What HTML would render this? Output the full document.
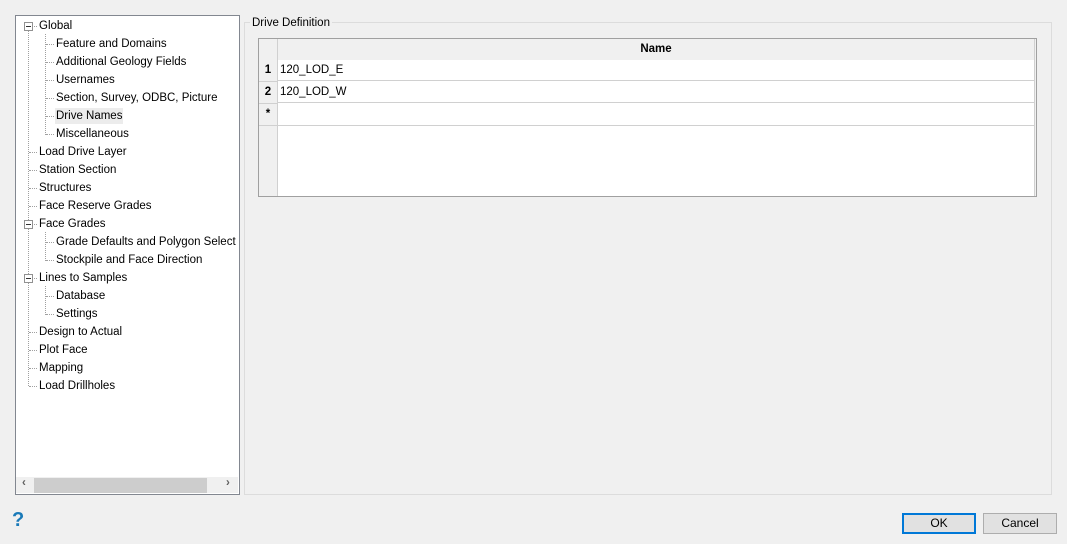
<!DOCTYPE html><html><head><style>
body{margin:0;width:1067px;height:544px;background:#f0f0f0;font-family:"Liberation Sans",sans-serif;font-size:11.5px;color:#000;position:relative;overflow:hidden}
.a{position:absolute}
.tree{left:15px;top:15px;width:223px;height:478px;border:1px solid #828790;background:#fff}
.it{position:absolute;white-space:nowrap;line-height:16px}
.sel{background:#ececec}
.vl{position:absolute;border-left:1px dotted #a0a0a0;width:0}
.hl{position:absolute;border-top:1px dotted #a0a0a0;height:0}
.box{position:absolute;width:7px;height:7px;border:1px solid #919191;background:#fff}
.box:after{content:"";position:absolute;left:1px;top:3px;width:5px;height:1px;background:#333}
.btn{position:absolute;height:19px;background:#e1e1e1;border:1px solid #adadad;text-align:center;line-height:19px;font-size:12px}
</style></head><body>
<div class="a tree">
<div class="vl" style="left:12px;top:15px;height:355px"></div>
<div class="vl" style="left:29px;top:18px;height:101px"></div>
<div class="vl" style="left:29px;top:216px;height:29px"></div>
<div class="vl" style="left:29px;top:270px;height:29px"></div>
</div>
<div id="t" class="a" style="left:0;top:0;width:238px;height:476px;overflow:hidden"></div>
<script>
var items=[[0,"Global",1],[1,"Feature and Domains"],[1,"Additional Geology Fields"],[1,"Usernames"],[1,"Section, Survey, ODBC, Picture"],[1,"Drive Names",0,1],[1,"Miscellaneous"],[0,"Load Drive Layer"],[0,"Station Section"],[0,"Structures"],[0,"Face Reserve Grades"],[0,"Face Grades",1],[1,"Grade Defaults and Polygon Select"],[1,"Stockpile and Face Direction"],[0,"Lines to Samples",1],[1,"Database"],[1,"Settings"],[0,"Design to Actual"],[0,"Plot Face"],[0,"Mapping"],[0,"Load Drillholes"]];
var h="";items.forEach(function(it,i){var y=26+i*18;var x=it[0]?56:39;
h+='<div class="hl" style="left:'+(it[0]?46:29)+'px;top:'+y+'px;width:8px"></div>';
if(it[2])h+='<div class="box" style="left:24px;top:'+(y-4)+'px"></div>';
h+='<div class="it'+(it[3]?' sel':'')+'" style="left:'+(x-1)+'px;top:'+(y-8)+'px;padding:0 1px">'+it[1]+'</div>';});
document.getElementById("t").innerHTML=h;
</script>
<div class="a" style="left:16px;top:477px;width:222px;height:16px;background:#f0f0f0"></div>
<div class="a" style="left:34px;top:478px;width:173px;height:15px;background:#cdcdcd"></div>
<div class="a" style="left:22px;top:477px;color:#606060;font-weight:bold">‹</div>
<div class="a" style="left:226px;top:477px;color:#606060;font-weight:bold">›</div>
<div class="a" style="left:244px;top:22px;width:806px;height:471px;border:1px solid #dcdcdc"></div>
<div class="a" style="left:250px;top:15px;background:#f0f0f0;padding:0 2px;line-height:16px">Drive Definition</div>
<div class="a" style="left:258px;top:38px;width:777px;height:157px;border:1px solid #a0a0a0;background:#f0f0f0">
<div class="a" style="left:0;top:0;width:18px;height:157px;border-right:1px solid #d0d0d0;background:#f0f0f0"></div>
<div class="a" style="left:19px;top:0;width:756px;height:21px;border-bottom:1px solid #d0d0d0;text-align:center;line-height:21px;font-weight:bold">Name</div>
<div class="a" style="left:0;top:21px;width:18px;height:21px;border-bottom:1px solid #d0d0d0;font-weight:bold;text-align:center;line-height:21px">1</div>
<div class="a" style="left:0;top:43px;width:18px;height:21px;border-bottom:1px solid #d0d0d0;font-weight:bold;text-align:center;line-height:21px">2</div>
<div class="a" style="left:0;top:65px;width:18px;height:21px;border-bottom:1px solid #d0d0d0;font-weight:bold;text-align:center;line-height:21px">*</div>
<div class="a" style="left:19px;top:21px;width:756px;height:136px;background:#fff"></div>
<div class="a" style="left:19px;top:21px;width:756px;height:21px;border-bottom:1px solid #d0d0d0;background:#fff;line-height:21px;padding-left:2px;box-sizing:border-box">120_LOD_E</div>
<div class="a" style="left:19px;top:43px;width:756px;height:21px;border-bottom:1px solid #d0d0d0;background:#fff;line-height:21px;padding-left:2px;box-sizing:border-box">120_LOD_W</div>
<div class="a" style="left:19px;top:65px;width:756px;height:21px;border-bottom:1px solid #d0d0d0;background:#fff"></div>
<div class="a" style="left:775px;top:0;width:1px;height:157px;background:#d0d0d0"></div>
</div>
<div class="a" style="left:12px;top:509px;color:#1a7ab8;font-weight:bold;font-size:20px">?</div>
<div class="btn" style="left:902px;top:513px;width:70px;border:2px solid #0078d7;height:17px;line-height:17px">OK</div>
<div class="btn" style="left:983px;top:513px;width:72px">Cancel</div>
</body></html>
